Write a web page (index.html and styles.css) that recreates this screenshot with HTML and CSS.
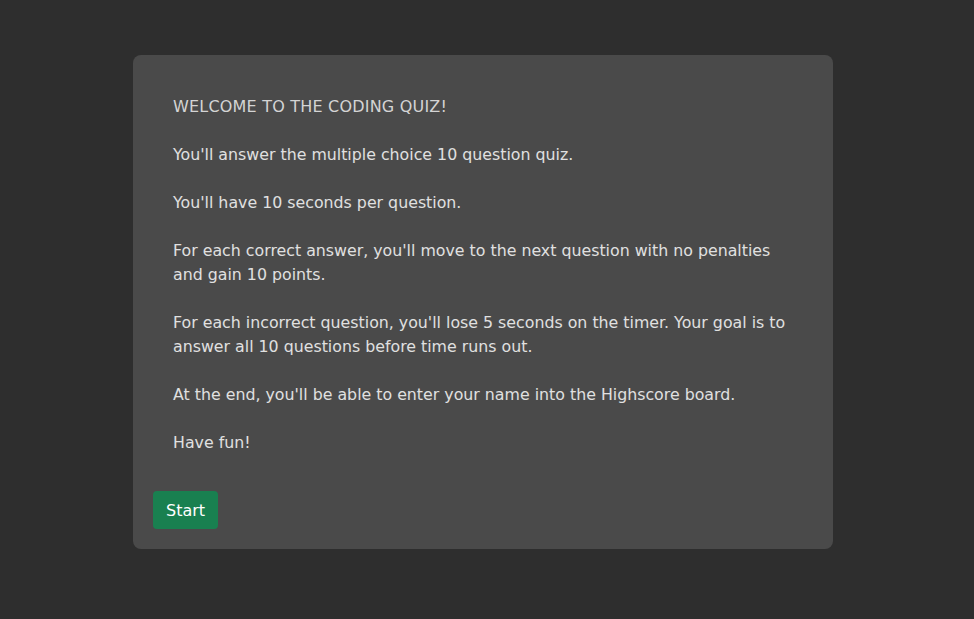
FILE: index.html
```html
<!DOCTYPE html>
<html>
<head>
<meta charset="utf-8">
<link rel="stylesheet" href="styles.css">
</head>
<body>
<main class="page">
  <section class="card">
    <div class="intro">
      <p class="title">WELCOME TO THE CODING QUIZ!</p>
      <p>You'll answer the multiple choice 10 question quiz.</p>
      <p>You'll have 10 seconds per question.</p>
      <p>For each correct answer, you'll move to the next question with no penalties and gain 10 points.</p>
      <p>For each incorrect question, you'll lose 5 seconds on the timer. Your goal is to answer all 10 questions before time runs out.</p>
      <p>At the end, you'll be able to enter your name into the Highscore board.</p>
      <p>Have fun!</p>
    </div>
    <button class="start">Start</button>
  </section>
</main>
</body>
</html>
```
FILE: styles.css
```css
html, body {
  margin: 0;
  padding: 0;
  background: #2e2e2e;
  height: 100%;
}
body {
  font-family: "DejaVu Sans", sans-serif;
}
.page {
  display: flex;
  justify-content: center;
  padding: 55px 8px 0 0;
}
.card {
  width: 700px;
  box-sizing: border-box;
  background: #4a4a4a;
  border-radius: 8px;
  padding: 20px;
}
.intro {
  padding: 20px 20px 0;
  color: #e0e0e0;
  font-size: 15.8px;
  line-height: 24px;
}
.intro p {
  margin: 0 0 24px;
}
.intro p:last-child {
  margin-bottom: 36px;
}
.intro .title {
  color: #d4d4d4;
  font-size: 16px;
  letter-spacing: 0.2px;
}
.start {
  display: block;
  height: 38px;
  padding: 0 13px;
  border: none;
  border-radius: 4px;
  background: #198050;
  color: #ffffff;
  font-family: "DejaVu Sans", sans-serif;
  font-size: 16px;
}
```
